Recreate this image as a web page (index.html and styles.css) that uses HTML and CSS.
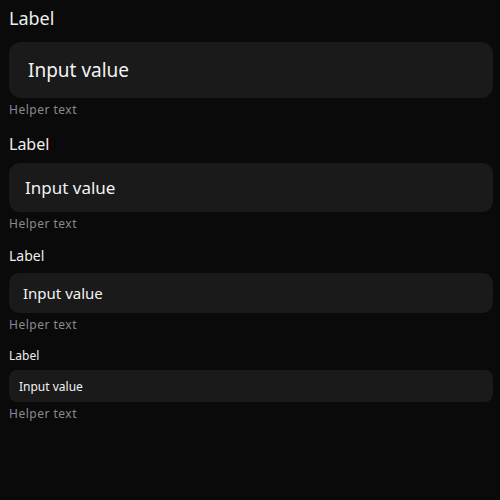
FILE: index.html
```html
<!DOCTYPE html>
<html>
<head>
<meta charset="utf-8">
<link rel="stylesheet" href="styles.css">
</head>
<body>
<div class="page">
  <div class="field xl">
    <div class="label">Label</div>
    <div class="input">Input value</div>
    <div class="helper">Helper text</div>
  </div>
  <div class="field lg">
    <div class="label">Label</div>
    <div class="input">Input value</div>
    <div class="helper">Helper text</div>
  </div>
  <div class="field md">
    <div class="label">Label</div>
    <div class="input">Input value</div>
    <div class="helper">Helper text</div>
  </div>
  <div class="field sm">
    <div class="label">Label</div>
    <div class="input">Input value</div>
    <div class="helper">Helper text</div>
  </div>
</div>
</body>
</html>
```
FILE: styles.css
```css
html, body {
  margin: 0;
  height: 100%;
  background: #0a0a0a;
}
body {
  font-family: "Noto Sans", "DejaVu Sans", sans-serif;
  color: #f0f0f0;
}
.page {
  padding: 4px 7px 0 9px;
  display: flex;
  flex-direction: column;
}
.field {
  display: flex;
  flex-direction: column;
}
.label {
  color: #eeeeee;
}
.input {
  background: #1a1a1a;
  display: flex;
  align-items: center;
  color: #f2f2f2;
}
.helper {
  font-size: 12px;
  line-height: 16px;
  color: #8a8a8a;
  letter-spacing: 0.5px;
  margin-top: 4px;
}
.xl .label { font-size: 18px; line-height: 28px; margin-bottom: 10px; }
.xl .input { height: 56px; border-radius: 12px; padding-left: 19px; font-size: 19px; }
.xl { margin-bottom: 15px; }
.lg .label { font-size: 16px; line-height: 22px; margin-bottom: 8px; }
.lg .input { height: 49px; border-radius: 11px; padding-left: 16px; font-size: 17px; }
.lg { margin-bottom: 14px; }
.md .label { font-size: 14px; line-height: 20px; margin-bottom: 7px; }
.md .input { height: 40px; border-radius: 10px; padding-left: 14px; font-size: 15px; }
.md { margin-bottom: 15px; }
.sm .label { font-size: 12px; line-height: 16px; margin-bottom: 6px; }
.sm .input { height: 32px; border-radius: 8px; padding-left: 10px; font-size: 12px; }
```
